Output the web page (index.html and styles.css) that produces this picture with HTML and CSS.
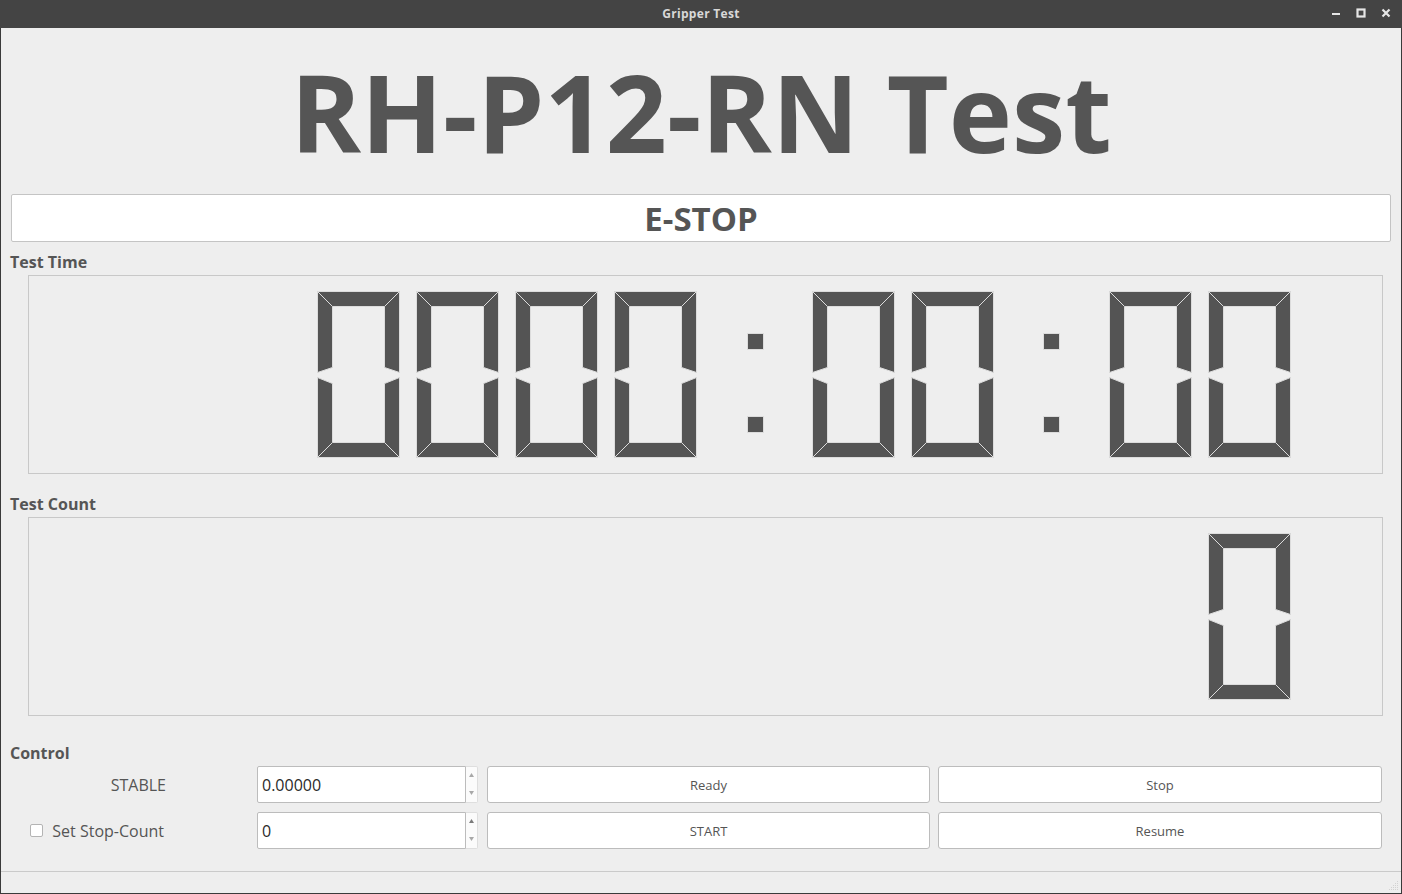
FILE: index.html
```html
<!DOCTYPE html>
<html>
<head>
<meta charset="utf-8">
<title>Gripper Test</title>
<link rel="stylesheet" href="styles.css">
</head>
<body>
<div class="window">
  <div class="titlebar">
    <span class="wtitle">Gripper Test</span>
    <div class="wbtns">
      <svg class="wbtn" width="12" height="12" viewBox="0 0 12 12"><rect x="2" y="6" width="8" height="2" fill="#e6e6e6"/></svg>
      <svg class="wbtn" width="12" height="12" viewBox="0 0 12 12"><rect x="2.5" y="2.5" width="7" height="7" fill="none" stroke="#e6e6e6" stroke-width="2.2"/></svg>
      <svg class="wbtn" width="12" height="12" viewBox="0 0 12 12"><path d="M2.5 2.5 L9.5 9.5 M9.5 2.5 L2.5 9.5" stroke="#e6e6e6" stroke-width="2.2"/></svg>
    </div>
  </div>
  <div class="content">
    <h1 class="title">RH-P12-RN Test</h1>
    <div class="estop">E-STOP</div>
    <div class="glabel first">Test Time</div>
    <div class="lcd-frame">
      <svg class="lcd" width="1353" height="197" viewBox="0 0 1353 197">
        <defs>
          <g id="d0" fill="#545454" stroke="#dcdcdc" stroke-width="1" stroke-linejoin="miter">
            <polygon points="0,0 82,0 67,15 15,15"/>
            <polygon points="0,166 82,166 67,151 15,151"/>
            <polygon points="0,0 15,15 15,76 0,81"/>
            <polygon points="82,0 67,15 67,76 82,81"/>
            <polygon points="0,86 15,92 15,151 0,166"/>
            <polygon points="82,86 67,92 67,151 82,166"/>
          </g>
          <g id="dot">
            <rect x="0" y="0" width="16" height="16" fill="#545454" stroke="#dcdcdc" stroke-width="1"/>
          </g>
        </defs>
        <use href="#d0" x="288.5" y="15.5"/>
        <use href="#d0" x="387.5" y="15.5"/>
        <use href="#d0" x="486.5" y="15.5"/>
        <use href="#d0" x="585.5" y="15.5"/>
        <use href="#dot" x="718.5" y="57.5"/>
        <use href="#dot" x="718.5" y="140.5"/>
        <use href="#d0" x="783.5" y="15.5"/>
        <use href="#d0" x="882.5" y="15.5"/>
        <use href="#dot" x="1014.5" y="57.5"/>
        <use href="#dot" x="1014.5" y="140.5"/>
        <use href="#d0" x="1080.5" y="15.5"/>
        <use href="#d0" x="1179.5" y="15.5"/>
      </svg>
    </div>
    <div class="glabel">Test Count</div>
    <div class="lcd-frame">
      <svg class="lcd" width="1353" height="197" viewBox="0 0 1353 197">
        <use href="#d0" x="1179.5" y="15.5"/>
      </svg>
    </div>
    <div class="glabel control">Control</div>
    <div class="controls">
      <div class="lbl">STABLE</div>
      <div class="spin">
        <div class="spin-field">0.00000</div>
        <div class="spin-arrows">
          <svg width="5" height="4" viewBox="0 0 5 4"><polygon points="2.5,0 5,4 0,4" fill="#a8a8a8"/></svg>
          <svg width="5" height="4" viewBox="0 0 5 4"><polygon points="0,0 5,0 2.5,4" fill="#a8a8a8"/></svg>
        </div>
      </div>
      <button class="btn">Ready</button>
      <button class="btn last">Stop</button>

      <div class="lbl chk"><span class="check"></span><span>Set Stop-Count</span></div>
      <div class="spin">
        <div class="spin-field">0</div>
        <div class="spin-arrows">
          <svg width="5" height="4" viewBox="0 0 5 4"><polygon points="2.5,0 5,4 0,4" fill="#7a7a7a"/></svg>
          <svg width="5" height="4" viewBox="0 0 5 4"><polygon points="0,0 5,0 2.5,4" fill="#a8a8a8"/></svg>
        </div>
      </div>
      <button class="btn">START</button>
      <button class="btn last">Resume</button>
    </div>
  </div>
  <div class="statusbar">
    <svg class="grip" width="10" height="10" viewBox="0 0 10 10" fill="#d2d2d2">
      <rect x="8" y="0" width="1" height="1"/>
      <rect x="6" y="2" width="1" height="1"/><rect x="8" y="2" width="1" height="1"/>
      <rect x="4" y="4" width="1" height="1"/><rect x="6" y="4" width="1" height="1"/><rect x="8" y="4" width="1" height="1"/>
      <rect x="2" y="6" width="1" height="1"/><rect x="4" y="6" width="1" height="1"/><rect x="6" y="6" width="1" height="1"/><rect x="8" y="6" width="1" height="1"/>
      <rect x="0" y="8" width="1" height="1"/><rect x="2" y="8" width="1" height="1"/><rect x="4" y="8" width="1" height="1"/><rect x="6" y="8" width="1" height="1"/><rect x="8" y="8" width="1" height="1"/>
    </svg>
  </div>
</div>
</body>
</html>
```
FILE: styles.css
```css
* { box-sizing: border-box; }
html, body { margin: 0; padding: 0; }
body {
  width: 1402px;
  height: 894px;
  font-family: "Open Sans", "Noto Sans", sans-serif;
  color: #555555;
  background: #eeeeee;
  overflow: hidden;
}
.window {
  width: 1402px;
  height: 894px;
  display: flex;
  flex-direction: column;
  background: #eeeeee;
  border-left: 1px solid #3a3a3a;
  border-right: 1px solid #3a3a3a;
  border-bottom: 1px solid #3a3a3a;
}
.titlebar {
  height: 28px;
  margin: 0 -1px;
  background: #444444;
  position: relative;
  display: flex;
  align-items: center;
  justify-content: center;
  padding-bottom: 2px;
}
.wtitle {
  font-weight: 700;
  font-size: 12px;
  color: #d8d8d8;
  letter-spacing: 0.3px;
}
.wbtns {
  position: absolute;
  right: 10px;
  top: 7px;
  display: flex;
  gap: 13px;
}
.wbtn { display: block; }
.content {
  flex: 1;
  display: flex;
  flex-direction: column;
}
.title {
  margin: 30px 0 0 0;
  height: 107px;
  font-size: 107px;
  line-height: 107px;
  font-weight: 700;
  text-align: center;
  color: #555555;
}
.estop {
  margin: 29px 10px 0 10px;
  height: 48px;
  background: #ffffff;
  border: 1px solid #c4c4c4;
  border-radius: 2px;
  display: flex;
  align-items: center;
  justify-content: center;
  font-size: 33px;
  font-weight: 700;
  color: #555555;
}
.glabel {
  margin: 0 0 0 9px;
  font-size: 16px;
  line-height: 20px;
  font-weight: 700;
  color: #555555;
}
.glabel.first { margin-top: 10px; }
.glabel + .lcd-frame { margin-top: 3px; }
.lcd-frame {
  margin-left: 27px;
  width: 1355px;
  height: 199px;
  border: 1px solid #c8c8c8;
  background: #eeeeee;
}
.lcd { display: block; }
.lcd-frame + .glabel { margin-top: 20px; }
.glabel.control { margin-top: 27px; }
.controls {
  margin: 3px 19px 0 9px;
  display: grid;
  grid-template-columns: 238px 221px 443px 443px;
  grid-auto-rows: 37px;
  column-gap: 9px;
  row-gap: 9px;
}
.lbl {
  display: flex;
  align-items: center;
  justify-content: flex-end;
  padding-right: 82px;
  font-size: 16px;
  color: #555555;
  gap: 9px;
}
.lbl.chk { padding-right: 84px; }
.check {
  width: 13px;
  height: 13px;
  border: 1px solid #b4b4b4;
  border-radius: 2px;
  background: #ffffff;
}
.spin {
  display: flex;
  height: 37px;
}
.spin-field {
  flex: 1;
  background: #ffffff;
  border: 1px solid #bcbcbc;
  border-radius: 2px 0 0 2px;
  display: flex;
  align-items: center;
  padding-left: 4px;
  font-size: 16px;
  color: #2a2a2a;
}
.spin-arrows {
  width: 12px;
  background: #fbfbfb;
  border: 1px solid #dedede;
  border-left: none;
  border-radius: 0 2px 2px 0;
  display: flex;
  flex-direction: column;
  align-items: center;
  justify-content: space-between;
  padding: 6px 0 7px 0;
}
.spin-arrows svg { display: block; }
.btn {
  height: 37px;
  margin: 0;
  background: #ffffff;
  border: 1px solid #bcbcbc;
  border-radius: 3px;
  font-family: "Open Sans", "Noto Sans", sans-serif;
  font-size: 13px;
  color: #555555;
  padding: 0;
}
.btn.last { margin-left: -1px; }
.statusbar {
  height: 22px;
  border-top: 1px solid #cacaca;
  display: flex;
  justify-content: flex-end;
  align-items: flex-end;
  padding: 0 2px 2px 0;
}
.grip { display: block; }
```
